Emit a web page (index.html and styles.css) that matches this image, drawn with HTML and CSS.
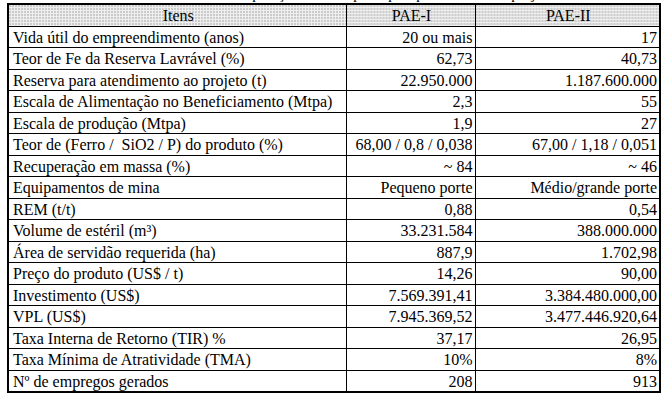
FILE: index.html
```html
<!DOCTYPE html>
<html lang="pt">
<head>
<meta charset="utf-8">
<link rel="stylesheet" href="styles.css">
</head>
<body>
<div class="caption">Tabela 1 – Comparação entre os principais parâmetros dos projetos</div>
<table class="data">
  <colgroup><col class="c1"><col class="c2"><col class="c3"></colgroup>
  <thead>
    <tr><th>Itens</th><th>PAE-I</th><th>PAE-II</th></tr>
  </thead>
  <tbody>
    <tr><td>Vida útil do empreendimento (anos)</td><td>20 ou mais</td><td>17</td></tr>
    <tr><td>Teor de Fe da Reserva Lavrável (%)</td><td>62,73</td><td>40,73</td></tr>
    <tr><td>Reserva para atendimento ao projeto (t)</td><td>22.950.000</td><td>1.187.600.000</td></tr>
    <tr><td>Escala de Alimentação no Beneficiamento (Mtpa)</td><td>2,3</td><td>55</td></tr>
    <tr><td>Escala de produção (Mtpa)</td><td>1,9</td><td>27</td></tr>
    <tr><td>Teor de (Ferro /&nbsp; SiO2 / P) do produto (%)</td><td>68,00 / 0,8 / 0,038</td><td>67,00 / 1,18 / 0,051</td></tr>
    <tr><td>Recuperação em massa (%)</td><td>~ 84</td><td>~ 46</td></tr>
    <tr><td>Equipamentos de mina</td><td>Pequeno porte</td><td>Médio/grande porte</td></tr>
    <tr><td>REM (t/t)</td><td>0,88</td><td>0,54</td></tr>
    <tr><td>Volume de estéril (m³)</td><td>33.231.584</td><td>388.000.000</td></tr>
    <tr><td>Área de servidão requerida (ha)</td><td>887,9</td><td>1.702,98</td></tr>
    <tr><td>Preço do produto (US$ / t)</td><td>14,26</td><td>90,00</td></tr>
    <tr><td>Investimento (US$)</td><td>7.569.391,41</td><td>3.384.480.000,00</td></tr>
    <tr><td>VPL (US$)</td><td>7.945.369,52</td><td>3.477.446.920,64</td></tr>
    <tr><td>Taxa Interna de Retorno (TIR) %</td><td>37,17</td><td>26,95</td></tr>
    <tr><td>Taxa Mínima de Atratividade (TMA)</td><td>10%</td><td>8%</td></tr>
    <tr><td>Nº de empregos gerados</td><td>208</td><td>913</td></tr>
  </tbody>
</table>
</body>
</html>
```

FILE: styles.css
```css
html, body {
  margin: 0;
  padding: 0;
  background: #ffffff;
}
body {
  padding: 3px 0 0 7px;
  font-family: "Liberation Serif", "Times New Roman", serif;
  font-size: 16px;
  color: #000;
}
.caption {
  height: 0;
  line-height: 16px;
  margin-top: -17px;
  margin-bottom: 17px;
  padding-left: 150px;
  font-size: 15px;
  white-space: nowrap;
}
.data {
  border-collapse: collapse;
  border: 2px solid #000;
  table-layout: fixed;
  width: 654px;
}
.c1 { width: 338px; }
.c2 { width: 129px; }
.c3 { width: 185px; }
.data th, .data td {
  border: 1px solid #000;
  height: 19.5px;
  padding: 1px 2px 0 4px;
  line-height: 19px;
  white-space: nowrap;
  overflow: hidden;
}
.data th {
  font-weight: normal;
  text-align: center;
  background-color: #eeeeee;
  background-image: radial-gradient(circle at 1px 1px, #c9c9c9 0.7px, transparent 0.8px);
  background-size: 3px 3px;
}
.data td + td {
  text-align: right;
}
```
